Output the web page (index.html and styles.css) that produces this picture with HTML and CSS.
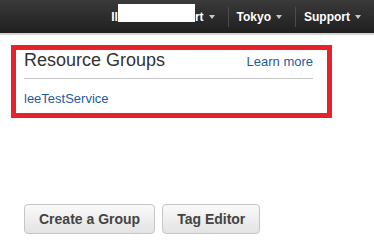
FILE: index.html
```html
<!DOCTYPE html>
<html>
<head>
    <meta charset="utf-8" />
    <title>Resource Groups</title>
    <link rel="stylesheet" href="styles.css">
</head>
<body>
    <div class="nav">
        <div class="nav-item">Il<span class="mask"></span>rt<span class="caret"></span></div>
        <div class="nav-sep"></div>
        <div class="nav-item">Tokyo<span class="caret"></span></div>
        <div class="nav-sep"></div>
        <div class="nav-item">Support<span class="caret"></span></div>
    </div>
    <div class="page">
        <div class="panel">
            <div class="panel-head">
                <div class="panel-title">Resource Groups</div>
                <a class="learn" href="#">Learn more</a>
            </div>
            <div class="panel-body">
                <a class="group-link" href="#">leeTestService</a>
            </div>
        </div>
        <div class="actions">
            <button class="btn">Create a Group</button>
            <button class="btn">Tag Editor</button>
        </div>
    </div>
</body>
</html>
```

FILE: styles.css
```css
* { box-sizing: border-box; }
body { margin: 0; background: #fff; font-family: "Liberation Sans", Arial, sans-serif; color: #444; }
a { text-decoration: none; }

.nav { height: 35px; display: flex; justify-content: flex-end; align-items: center; background: linear-gradient(#3a3a3a, #1f1f1f); border-bottom: 2px solid #d4d4d4; }
.nav-item { height: 33px; display: flex; align-items: center; padding: 0 13px 0 8px; color: #fff; font-size: 12px; font-weight: bold; }
.nav-sep { width: 1px; height: 20px; background: #4c4c4c; }
.mask { align-self: flex-start; margin-top: 4px; width: 77px; height: 18px; background: #fff; }
.caret { margin-left: 5px; width: 0; height: 0; border-left: 3.5px solid transparent; border-right: 3.5px solid transparent; border-top: 4px solid #c8c8c8; }

.page { padding: 10px 11px; }
.panel { width: 321px; border: 5px solid #e8222b; padding: 0 14px 7px 8px; }
.panel-head { display: flex; justify-content: space-between; align-items: baseline; border-bottom: 1px solid #c4c4c4; padding-bottom: 7px; }
.panel-title { font-size: 18px; color: #333; }
.learn { font-size: 13px; color: #1f5a9e; }
.panel-body { padding-top: 11px; line-height: 15px; }
.group-link { font-size: 13px; color: #1f5a9e; }

.actions { display: flex; gap: 7px; margin-top: 86px; padding-left: 13px; }
.btn { height: 30px; padding: 0 14px; border: 1px solid #c6c6c6; border-radius: 4px; background: linear-gradient(#fafafa, #e3e3e3); font-family: "Liberation Sans", Arial, sans-serif; font-size: 14px; font-weight: bold; color: #444; }
```
